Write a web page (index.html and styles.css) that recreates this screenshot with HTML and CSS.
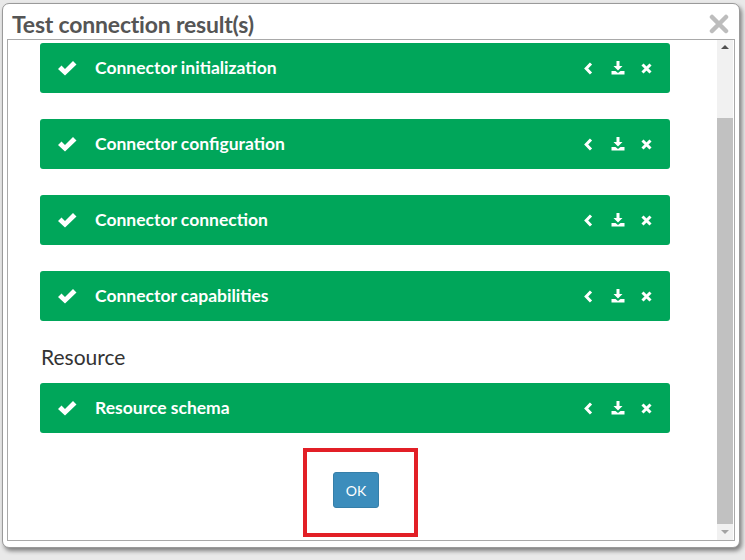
FILE: index.html
```html
<!DOCTYPE html>
<html>
<head>
<meta charset="utf-8">
<link rel="stylesheet" href="styles.css">
</head>
<body>
<div class="dialog">
  <div class="header">
    <h1 class="title">Test connection result(s)</h1>
    <svg class="close" width="20" height="20" viewBox="0 0 20 20"><path d="M3 3 L17 17 M17 3 L3 17" stroke="#bdbdbd" stroke-width="4.5" stroke-linecap="round"/></svg>
  </div>
  <div class="content">
    <div class="scroll">
      <div class="bar">
        <svg class="check" width="19" height="15" viewBox="0 0 19 15"><polygon points="0,8 3.5,4.5 7,8 15,0 18.5,3.5 7,14.5" fill="#fff"/></svg>
        <span class="label">Connector initialization</span>
        <span class="tools">
          <svg width="9" height="13" viewBox="0 0 9 13"><polyline points="7,1.5 2.2,6.5 7,11.5" fill="none" stroke="#fff" stroke-width="3"/></svg>
          <svg width="14" height="14" viewBox="0 0 14 14"><path d="M5.5 0 H8.5 V5 H11.5 L7 9.5 L2.5 5 H5.5 Z M0.5 10 H4.5 L7 12 L9.5 10 H13.5 V13.5 H0.5 Z" fill="#fff"/></svg>
          <svg width="11" height="11" viewBox="0 0 11 11"><path d="M1.5 1.5 L9.5 9.5 M9.5 1.5 L1.5 9.5" stroke="#fff" stroke-width="3"/></svg>
        </span>
      </div>
      <div class="bar">
        <svg class="check" width="19" height="15" viewBox="0 0 19 15"><polygon points="0,8 3.5,4.5 7,8 15,0 18.5,3.5 7,14.5" fill="#fff"/></svg>
        <span class="label">Connector configuration</span>
        <span class="tools">
          <svg width="9" height="13" viewBox="0 0 9 13"><polyline points="7,1.5 2.2,6.5 7,11.5" fill="none" stroke="#fff" stroke-width="3"/></svg>
          <svg width="14" height="14" viewBox="0 0 14 14"><path d="M5.5 0 H8.5 V5 H11.5 L7 9.5 L2.5 5 H5.5 Z M0.5 10 H4.5 L7 12 L9.5 10 H13.5 V13.5 H0.5 Z" fill="#fff"/></svg>
          <svg width="11" height="11" viewBox="0 0 11 11"><path d="M1.5 1.5 L9.5 9.5 M9.5 1.5 L1.5 9.5" stroke="#fff" stroke-width="3"/></svg>
        </span>
      </div>
      <div class="bar">
        <svg class="check" width="19" height="15" viewBox="0 0 19 15"><polygon points="0,8 3.5,4.5 7,8 15,0 18.5,3.5 7,14.5" fill="#fff"/></svg>
        <span class="label">Connector connection</span>
        <span class="tools">
          <svg width="9" height="13" viewBox="0 0 9 13"><polyline points="7,1.5 2.2,6.5 7,11.5" fill="none" stroke="#fff" stroke-width="3"/></svg>
          <svg width="14" height="14" viewBox="0 0 14 14"><path d="M5.5 0 H8.5 V5 H11.5 L7 9.5 L2.5 5 H5.5 Z M0.5 10 H4.5 L7 12 L9.5 10 H13.5 V13.5 H0.5 Z" fill="#fff"/></svg>
          <svg width="11" height="11" viewBox="0 0 11 11"><path d="M1.5 1.5 L9.5 9.5 M9.5 1.5 L1.5 9.5" stroke="#fff" stroke-width="3"/></svg>
        </span>
      </div>
      <div class="bar">
        <svg class="check" width="19" height="15" viewBox="0 0 19 15"><polygon points="0,8 3.5,4.5 7,8 15,0 18.5,3.5 7,14.5" fill="#fff"/></svg>
        <span class="label">Connector capabilities</span>
        <span class="tools">
          <svg width="9" height="13" viewBox="0 0 9 13"><polyline points="7,1.5 2.2,6.5 7,11.5" fill="none" stroke="#fff" stroke-width="3"/></svg>
          <svg width="14" height="14" viewBox="0 0 14 14"><path d="M5.5 0 H8.5 V5 H11.5 L7 9.5 L2.5 5 H5.5 Z M0.5 10 H4.5 L7 12 L9.5 10 H13.5 V13.5 H0.5 Z" fill="#fff"/></svg>
          <svg width="11" height="11" viewBox="0 0 11 11"><path d="M1.5 1.5 L9.5 9.5 M9.5 1.5 L1.5 9.5" stroke="#fff" stroke-width="3"/></svg>
        </span>
      </div>
      <h2 class="section">Resource</h2>
      <div class="bar">
        <svg class="check" width="19" height="15" viewBox="0 0 19 15"><polygon points="0,8 3.5,4.5 7,8 15,0 18.5,3.5 7,14.5" fill="#fff"/></svg>
        <span class="label">Resource schema</span>
        <span class="tools">
          <svg width="9" height="13" viewBox="0 0 9 13"><polyline points="7,1.5 2.2,6.5 7,11.5" fill="none" stroke="#fff" stroke-width="3"/></svg>
          <svg width="14" height="14" viewBox="0 0 14 14"><path d="M5.5 0 H8.5 V5 H11.5 L7 9.5 L2.5 5 H5.5 Z M0.5 10 H4.5 L7 12 L9.5 10 H13.5 V13.5 H0.5 Z" fill="#fff"/></svg>
          <svg width="11" height="11" viewBox="0 0 11 11"><path d="M1.5 1.5 L9.5 9.5 M9.5 1.5 L1.5 9.5" stroke="#fff" stroke-width="3"/></svg>
        </span>
      </div>
      <div class="footer">
        <button class="ok">OK</button>
        <div class="highlight"></div>
      </div>
    </div>
    <div class="scrollbar">
      <div class="arrow up"></div>
      <div class="track"><div class="thumb"></div></div>
      <div class="arrow down"></div>
    </div>
  </div>
</div>
</body>
</html>
```

FILE: styles.css
```css
html, body {
  margin: 0;
  padding: 0;
}
body {
  width: 745px;
  height: 560px;
  overflow: hidden;
  background: #e9e9e9;
  font-family: Lato, "Open Sans", sans-serif;
}
.dialog {
  margin: 3px 0 0 2px;
  width: 736px;
  height: 543px;
  background: #fff;
  border: 1px solid #9a9a9a;
  border-radius: 7px;
  box-shadow: 2px 3px 4px rgba(0, 0, 0, 0.45);
  display: flex;
  flex-direction: column;
  box-sizing: content-box;
}
.header {
  height: 35px;
  display: flex;
  align-items: center;
  justify-content: space-between;
  padding: 0 10px 0 9px;
}
.title {
  margin: 0;
  font-family: Lato, sans-serif;
  font-weight: 700;
  font-size: 23px;
  line-height: 28px;
  color: #555;
  letter-spacing: -0.2px;
  position: relative;
  top: 2px;
}
.close {
  position: relative;
  top: 2px;
}
.content {
  margin: 0 4px 0 4px;
  height: 500px;
  border: 1px solid #a9a9a9;
  display: flex;
  overflow: hidden;
}
.scroll {
  flex: 1;
  padding: 3px 0 0 32px;
}
.bar {
  width: 630px;
  height: 50px;
  background: #00a65a;
  border-radius: 3px;
  display: flex;
  align-items: center;
  margin-bottom: 26px;
  color: #fff;
}
.check {
  margin-left: 18px;
  margin-right: 18px;
}
.label {
  font-family: Lato, sans-serif;
  font-weight: 700;
  font-size: 17.5px;
  flex: 1;
  position: relative;
  top: -1px;
}
.tools {
  display: flex;
  align-items: center;
  gap: 16px;
  margin-right: 18px;
}
.tools svg {
  display: block;
}
.tools svg:first-child {
  position: relative;
  left: -2px;
}
.section {
  margin: -4px 0 12px 1px;
  font-family: Lato, sans-serif;
  font-weight: 400;
  font-size: 21px;
  color: #333;
  line-height: 28px;
}
.footer {
  width: 630px;
  display: flex;
  justify-content: center;
  position: relative;
  margin-top: -25px;
  padding-top: 38px;
}
.ok {
  width: 46px;
  height: 36px;
  background: #3c8dbc;
  border: 1px solid #367fa9;
  border-radius: 3px;
  color: #fff;
  font-family: Lato, sans-serif;
  font-size: 14px;
  padding: 0;
  position: relative;
  left: 1px;
}
.highlight {
  position: absolute;
  left: 263px;
  top: 14px;
  width: 107px;
  height: 81px;
  border: 4px solid #e21f26;
}
.scrollbar {
  width: 16px;
  margin-right: 1px;
  background: #f1f1f1;
  display: flex;
  flex-direction: column;
}
.arrow {
  height: 16px;
  position: relative;
}
.arrow.up::after {
  content: "";
  position: absolute;
  left: 4px;
  top: 5px;
  border-left: 4px solid transparent;
  border-right: 4px solid transparent;
  border-bottom: 4px solid #505050;
}
.arrow.down::after {
  content: "";
  position: absolute;
  left: 4px;
  top: 6px;
  border-left: 4px solid transparent;
  border-right: 4px solid transparent;
  border-top: 4px solid #a3a3a3;
}
.track {
  flex: 1;
  padding-top: 62px;
  display: flex;
  flex-direction: column;
}
.thumb {
  flex: 1;
  background: #c1c1c1;
}
```
